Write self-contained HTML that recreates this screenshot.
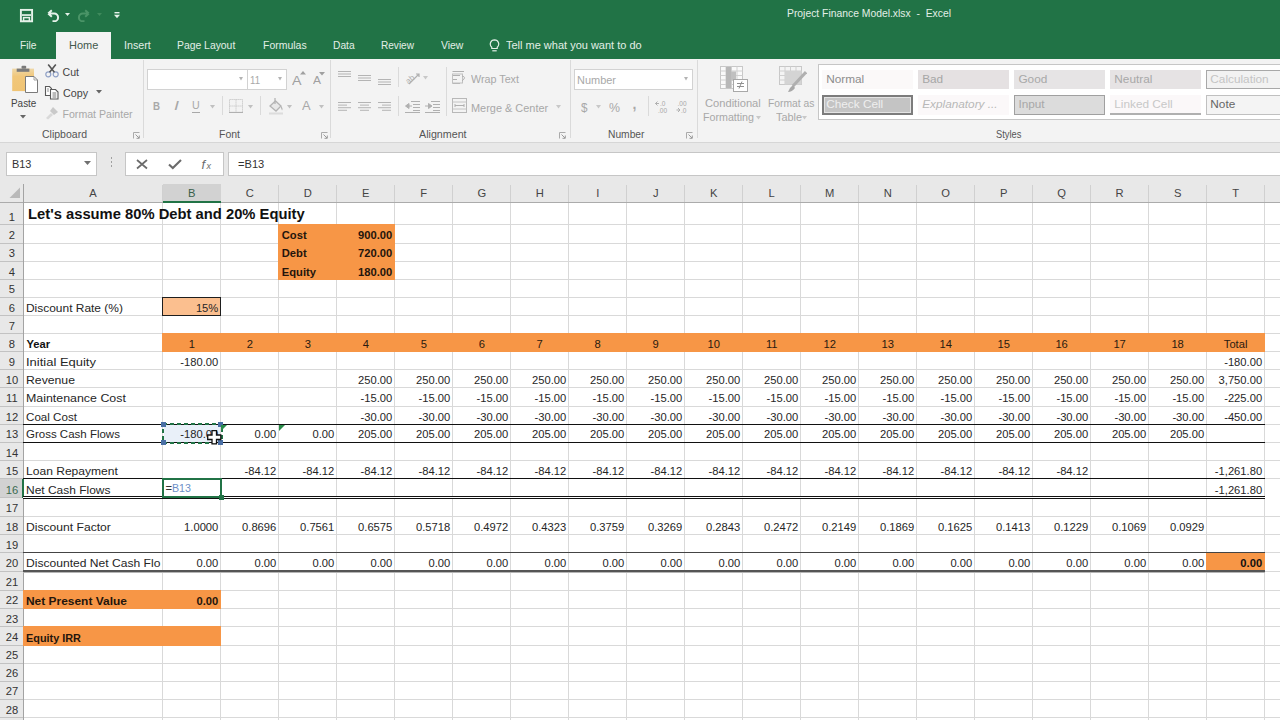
<!DOCTYPE html><html><head><meta charset="utf-8"><style>
html,body{margin:0;padding:0;width:1280px;height:720px;overflow:hidden;background:#fff;}
body{position:relative;font-family:"Liberation Sans",sans-serif;}
.a{position:absolute;}
.t{position:absolute;white-space:pre;}
</style></head><body>
<div class="a" style="left:0px;top:0px;width:1280px;height:58.5px;background:#217346;"></div>
<div class="a" style="left:56px;top:31.5px;width:55px;height:28px;background:#f3f3f3;"></div>
<div class="t" style="top:39.73px;font-size:10.6px;line-height:10.6px;color:#42584c;left:68.75px;transform-origin:0 50%;transform:scaleX(1.0362);">Home</div>
<div class="t" style="top:39.73px;font-size:10.6px;line-height:10.6px;color:#e3efe7;left:19.50px;transform-origin:0 50%;transform:scaleX(0.9660);">File</div>
<div class="t" style="top:39.73px;font-size:10.6px;line-height:10.6px;color:#e3efe7;left:124.00px;transform-origin:0 50%;transform:scaleX(1.0109);">Insert</div>
<div class="t" style="top:39.73px;font-size:10.6px;line-height:10.6px;color:#e3efe7;left:177.30px;transform-origin:0 50%;transform:scaleX(0.9794);">Page Layout</div>
<div class="t" style="top:39.73px;font-size:10.6px;line-height:10.6px;color:#e3efe7;left:262.60px;transform-origin:0 50%;transform:scaleX(0.9881);">Formulas</div>
<div class="t" style="top:39.73px;font-size:10.6px;line-height:10.6px;color:#e3efe7;left:333.00px;transform-origin:0 50%;transform:scaleX(0.9647);">Data</div>
<div class="t" style="top:39.73px;font-size:10.6px;line-height:10.6px;color:#e3efe7;left:381.00px;transform-origin:0 50%;transform:scaleX(0.9495);">Review</div>
<div class="t" style="top:39.73px;font-size:10.6px;line-height:10.6px;color:#e3efe7;left:440.60px;transform-origin:0 50%;transform:scaleX(0.9831);">View</div>
<div class="t" style="top:39.73px;font-size:10.6px;line-height:10.6px;color:#e3efe7;left:506.00px;transform-origin:0 50%;transform:scaleX(1.0374);">Tell me what you want to do</div>
<div class="t" style="top:9.28px;font-size:10.3px;line-height:10.3px;color:#e3efe7;left:787.00px;transform-origin:0 50%;transform:scaleX(1.0052);">Project Finance Model.xlsx  -  Excel</div>
<div class="a" style="left:0px;top:58.5px;width:1280px;height:84px;background:#f3f3f3;"></div>
<div class="a" style="left:0px;top:141.5px;width:1280px;height:1px;background:#d6d6d6;"></div>
<div class="a" style="left:0px;top:142.5px;width:1280px;height:41.5px;background:#e8e8e8;"></div>
<div class="a" style="left:0px;top:184px;width:1280px;height:536px;background:#ffffff;"></div>
<div class="a" style="left:0px;top:184px;width:1280px;height:18.5px;background:#e8e8e8;"></div>
<div class="a" style="left:0px;top:184px;width:23.4px;height:536px;background:#e8e8e8;"></div>
<div class="a" style="left:23.4px;top:224px;width:1256.6px;height:1px;background:#d9d9d9;"></div>
<div class="a" style="left:23.4px;top:243px;width:1256.6px;height:1px;background:#d9d9d9;"></div>
<div class="a" style="left:23.4px;top:261px;width:1256.6px;height:1px;background:#d9d9d9;"></div>
<div class="a" style="left:23.4px;top:279px;width:1256.6px;height:1px;background:#d9d9d9;"></div>
<div class="a" style="left:23.4px;top:297px;width:1256.6px;height:1px;background:#d9d9d9;"></div>
<div class="a" style="left:23.4px;top:315px;width:1256.6px;height:1px;background:#d9d9d9;"></div>
<div class="a" style="left:23.4px;top:333px;width:1256.6px;height:1px;background:#d9d9d9;"></div>
<div class="a" style="left:23.4px;top:351px;width:1256.6px;height:1px;background:#d9d9d9;"></div>
<div class="a" style="left:23.4px;top:369px;width:1256.6px;height:1px;background:#d9d9d9;"></div>
<div class="a" style="left:23.4px;top:387px;width:1256.6px;height:1px;background:#d9d9d9;"></div>
<div class="a" style="left:23.4px;top:406px;width:1256.6px;height:1px;background:#d9d9d9;"></div>
<div class="a" style="left:23.4px;top:424px;width:1256.6px;height:1px;background:#d9d9d9;"></div>
<div class="a" style="left:23.4px;top:442px;width:1256.6px;height:1px;background:#d9d9d9;"></div>
<div class="a" style="left:23.4px;top:460px;width:1256.6px;height:1px;background:#d9d9d9;"></div>
<div class="a" style="left:23.4px;top:478px;width:1256.6px;height:1px;background:#d9d9d9;"></div>
<div class="a" style="left:23.4px;top:497px;width:1256.6px;height:1px;background:#d9d9d9;"></div>
<div class="a" style="left:23.4px;top:516px;width:1256.6px;height:1px;background:#d9d9d9;"></div>
<div class="a" style="left:23.4px;top:534px;width:1256.6px;height:1px;background:#d9d9d9;"></div>
<div class="a" style="left:23.4px;top:552px;width:1256.6px;height:1px;background:#d9d9d9;"></div>
<div class="a" style="left:23.4px;top:571px;width:1256.6px;height:1px;background:#d9d9d9;"></div>
<div class="a" style="left:23.4px;top:590px;width:1256.6px;height:1px;background:#d9d9d9;"></div>
<div class="a" style="left:23.4px;top:608px;width:1256.6px;height:1px;background:#d9d9d9;"></div>
<div class="a" style="left:23.4px;top:626px;width:1256.6px;height:1px;background:#d9d9d9;"></div>
<div class="a" style="left:23.4px;top:645px;width:1256.6px;height:1px;background:#d9d9d9;"></div>
<div class="a" style="left:23.4px;top:663px;width:1256.6px;height:1px;background:#d9d9d9;"></div>
<div class="a" style="left:23.4px;top:681px;width:1256.6px;height:1px;background:#d9d9d9;"></div>
<div class="a" style="left:23.4px;top:699px;width:1256.6px;height:1px;background:#d9d9d9;"></div>
<div class="a" style="left:23.4px;top:717px;width:1256.6px;height:1px;background:#d9d9d9;"></div>
<div class="a" style="left:162px;top:202.5px;width:1px;height:517.5px;background:#d9d9d9;"></div>
<div class="a" style="left:220px;top:202.5px;width:1px;height:517.5px;background:#d9d9d9;"></div>
<div class="a" style="left:278px;top:202.5px;width:1px;height:517.5px;background:#d9d9d9;"></div>
<div class="a" style="left:336px;top:202.5px;width:1px;height:517.5px;background:#d9d9d9;"></div>
<div class="a" style="left:394px;top:202.5px;width:1px;height:517.5px;background:#d9d9d9;"></div>
<div class="a" style="left:452px;top:202.5px;width:1px;height:517.5px;background:#d9d9d9;"></div>
<div class="a" style="left:510px;top:202.5px;width:1px;height:517.5px;background:#d9d9d9;"></div>
<div class="a" style="left:568px;top:202.5px;width:1px;height:517.5px;background:#d9d9d9;"></div>
<div class="a" style="left:626px;top:202.5px;width:1px;height:517.5px;background:#d9d9d9;"></div>
<div class="a" style="left:684px;top:202.5px;width:1px;height:517.5px;background:#d9d9d9;"></div>
<div class="a" style="left:742px;top:202.5px;width:1px;height:517.5px;background:#d9d9d9;"></div>
<div class="a" style="left:800px;top:202.5px;width:1px;height:517.5px;background:#d9d9d9;"></div>
<div class="a" style="left:858px;top:202.5px;width:1px;height:517.5px;background:#d9d9d9;"></div>
<div class="a" style="left:916px;top:202.5px;width:1px;height:517.5px;background:#d9d9d9;"></div>
<div class="a" style="left:974px;top:202.5px;width:1px;height:517.5px;background:#d9d9d9;"></div>
<div class="a" style="left:1032px;top:202.5px;width:1px;height:517.5px;background:#d9d9d9;"></div>
<div class="a" style="left:1090px;top:202.5px;width:1px;height:517.5px;background:#d9d9d9;"></div>
<div class="a" style="left:1148px;top:202.5px;width:1px;height:517.5px;background:#d9d9d9;"></div>
<div class="a" style="left:1206px;top:202.5px;width:1px;height:517.5px;background:#d9d9d9;"></div>
<div class="a" style="left:1264px;top:202.5px;width:1px;height:517.5px;background:#d9d9d9;"></div>
<div class="a" style="left:162px;top:185px;width:1px;height:17.5px;background:#d0d0d0;"></div>
<div class="a" style="left:220px;top:185px;width:1px;height:17.5px;background:#d0d0d0;"></div>
<div class="a" style="left:278px;top:185px;width:1px;height:17.5px;background:#d0d0d0;"></div>
<div class="a" style="left:336px;top:185px;width:1px;height:17.5px;background:#d0d0d0;"></div>
<div class="a" style="left:394px;top:185px;width:1px;height:17.5px;background:#d0d0d0;"></div>
<div class="a" style="left:452px;top:185px;width:1px;height:17.5px;background:#d0d0d0;"></div>
<div class="a" style="left:510px;top:185px;width:1px;height:17.5px;background:#d0d0d0;"></div>
<div class="a" style="left:568px;top:185px;width:1px;height:17.5px;background:#d0d0d0;"></div>
<div class="a" style="left:626px;top:185px;width:1px;height:17.5px;background:#d0d0d0;"></div>
<div class="a" style="left:684px;top:185px;width:1px;height:17.5px;background:#d0d0d0;"></div>
<div class="a" style="left:742px;top:185px;width:1px;height:17.5px;background:#d0d0d0;"></div>
<div class="a" style="left:800px;top:185px;width:1px;height:17.5px;background:#d0d0d0;"></div>
<div class="a" style="left:858px;top:185px;width:1px;height:17.5px;background:#d0d0d0;"></div>
<div class="a" style="left:916px;top:185px;width:1px;height:17.5px;background:#d0d0d0;"></div>
<div class="a" style="left:974px;top:185px;width:1px;height:17.5px;background:#d0d0d0;"></div>
<div class="a" style="left:1032px;top:185px;width:1px;height:17.5px;background:#d0d0d0;"></div>
<div class="a" style="left:1090px;top:185px;width:1px;height:17.5px;background:#d0d0d0;"></div>
<div class="a" style="left:1148px;top:185px;width:1px;height:17.5px;background:#d0d0d0;"></div>
<div class="a" style="left:1206px;top:185px;width:1px;height:17.5px;background:#d0d0d0;"></div>
<div class="a" style="left:1264px;top:185px;width:1px;height:17.5px;background:#d0d0d0;"></div>
<div class="a" style="left:0px;top:224px;width:23.4px;height:1px;background:#c2c2c2;"></div>
<div class="a" style="left:0px;top:243px;width:23.4px;height:1px;background:#c2c2c2;"></div>
<div class="a" style="left:0px;top:261px;width:23.4px;height:1px;background:#c2c2c2;"></div>
<div class="a" style="left:0px;top:279px;width:23.4px;height:1px;background:#c2c2c2;"></div>
<div class="a" style="left:0px;top:297px;width:23.4px;height:1px;background:#c2c2c2;"></div>
<div class="a" style="left:0px;top:315px;width:23.4px;height:1px;background:#c2c2c2;"></div>
<div class="a" style="left:0px;top:333px;width:23.4px;height:1px;background:#c2c2c2;"></div>
<div class="a" style="left:0px;top:351px;width:23.4px;height:1px;background:#c2c2c2;"></div>
<div class="a" style="left:0px;top:369px;width:23.4px;height:1px;background:#c2c2c2;"></div>
<div class="a" style="left:0px;top:387px;width:23.4px;height:1px;background:#c2c2c2;"></div>
<div class="a" style="left:0px;top:406px;width:23.4px;height:1px;background:#c2c2c2;"></div>
<div class="a" style="left:0px;top:424px;width:23.4px;height:1px;background:#c2c2c2;"></div>
<div class="a" style="left:0px;top:442px;width:23.4px;height:1px;background:#c2c2c2;"></div>
<div class="a" style="left:0px;top:460px;width:23.4px;height:1px;background:#c2c2c2;"></div>
<div class="a" style="left:0px;top:478px;width:23.4px;height:1px;background:#c2c2c2;"></div>
<div class="a" style="left:0px;top:497px;width:23.4px;height:1px;background:#c2c2c2;"></div>
<div class="a" style="left:0px;top:516px;width:23.4px;height:1px;background:#c2c2c2;"></div>
<div class="a" style="left:0px;top:534px;width:23.4px;height:1px;background:#c2c2c2;"></div>
<div class="a" style="left:0px;top:552px;width:23.4px;height:1px;background:#c2c2c2;"></div>
<div class="a" style="left:0px;top:571px;width:23.4px;height:1px;background:#c2c2c2;"></div>
<div class="a" style="left:0px;top:590px;width:23.4px;height:1px;background:#c2c2c2;"></div>
<div class="a" style="left:0px;top:608px;width:23.4px;height:1px;background:#c2c2c2;"></div>
<div class="a" style="left:0px;top:626px;width:23.4px;height:1px;background:#c2c2c2;"></div>
<div class="a" style="left:0px;top:645px;width:23.4px;height:1px;background:#c2c2c2;"></div>
<div class="a" style="left:0px;top:663px;width:23.4px;height:1px;background:#c2c2c2;"></div>
<div class="a" style="left:0px;top:681px;width:23.4px;height:1px;background:#c2c2c2;"></div>
<div class="a" style="left:0px;top:699px;width:23.4px;height:1px;background:#c2c2c2;"></div>
<div class="a" style="left:0px;top:717px;width:23.4px;height:1px;background:#c2c2c2;"></div>
<div class="a" style="left:0px;top:202px;width:1280px;height:1px;background:#ababab;"></div>
<div class="a" style="left:23px;top:184px;width:1px;height:536px;background:#a3a3a3;"></div>
<div class="a" style="left:163.3px;top:184px;width:57.5px;height:18.5px;background:#d2d2d2;"></div>
<div class="a" style="left:163.3px;top:200.5px;width:57.5px;height:2px;background:#217346;"></div>
<div class="a" style="left:0px;top:479.0px;width:22.5px;height:18.0px;background:#d2d2d2;"></div>
<div class="a" style="left:22px;top:478.5px;width:2px;height:19.0px;background:#217346;"></div>
<div class="t" style="top:187.52px;font-size:11.2px;line-height:11.2px;color:#444;left:93.10px;transform:translateX(-50%) scaleX(1.0000);">A</div>
<div class="t" style="top:187.52px;font-size:11.2px;line-height:11.2px;color:#3a5f4a;left:191.80px;transform:translateX(-50%) scaleX(1.0000);">B</div>
<div class="t" style="top:187.52px;font-size:11.2px;line-height:11.2px;color:#444;left:249.79px;transform:translateX(-50%) scaleX(1.0000);">C</div>
<div class="t" style="top:187.52px;font-size:11.2px;line-height:11.2px;color:#444;left:307.77px;transform:translateX(-50%) scaleX(1.0000);">D</div>
<div class="t" style="top:187.52px;font-size:11.2px;line-height:11.2px;color:#444;left:365.76px;transform:translateX(-50%) scaleX(1.0000);">E</div>
<div class="t" style="top:187.52px;font-size:11.2px;line-height:11.2px;color:#444;left:423.75px;transform:translateX(-50%) scaleX(1.0000);">F</div>
<div class="t" style="top:187.52px;font-size:11.2px;line-height:11.2px;color:#444;left:481.75px;transform:translateX(-50%) scaleX(1.0000);">G</div>
<div class="t" style="top:187.52px;font-size:11.2px;line-height:11.2px;color:#444;left:539.74px;transform:translateX(-50%) scaleX(1.0000);">H</div>
<div class="t" style="top:187.52px;font-size:11.2px;line-height:11.2px;color:#444;left:597.73px;transform:translateX(-50%) scaleX(1.0000);">I</div>
<div class="t" style="top:187.52px;font-size:11.2px;line-height:11.2px;color:#444;left:655.72px;transform:translateX(-50%) scaleX(1.0000);">J</div>
<div class="t" style="top:187.52px;font-size:11.2px;line-height:11.2px;color:#444;left:713.71px;transform:translateX(-50%) scaleX(1.0000);">K</div>
<div class="t" style="top:187.52px;font-size:11.2px;line-height:11.2px;color:#444;left:771.70px;transform:translateX(-50%) scaleX(1.0000);">L</div>
<div class="t" style="top:187.52px;font-size:11.2px;line-height:11.2px;color:#444;left:829.69px;transform:translateX(-50%) scaleX(1.0000);">M</div>
<div class="t" style="top:187.52px;font-size:11.2px;line-height:11.2px;color:#444;left:887.68px;transform:translateX(-50%) scaleX(1.0000);">N</div>
<div class="t" style="top:187.52px;font-size:11.2px;line-height:11.2px;color:#444;left:945.67px;transform:translateX(-50%) scaleX(1.0000);">O</div>
<div class="t" style="top:187.52px;font-size:11.2px;line-height:11.2px;color:#444;left:1003.66px;transform:translateX(-50%) scaleX(1.0000);">P</div>
<div class="t" style="top:187.52px;font-size:11.2px;line-height:11.2px;color:#444;left:1061.64px;transform:translateX(-50%) scaleX(1.0000);">Q</div>
<div class="t" style="top:187.52px;font-size:11.2px;line-height:11.2px;color:#444;left:1119.64px;transform:translateX(-50%) scaleX(1.0000);">R</div>
<div class="t" style="top:187.52px;font-size:11.2px;line-height:11.2px;color:#444;left:1177.62px;transform:translateX(-50%) scaleX(1.0000);">S</div>
<div class="t" style="top:187.52px;font-size:11.2px;line-height:11.2px;color:#444;left:1235.61px;transform:translateX(-50%) scaleX(1.0000);">T</div>
<div class="t" style="top:212.12px;font-size:11.2px;line-height:11.2px;color:#333;left:11.90px;transform:translateX(-50%) scaleX(1.0000);">1</div>
<div class="t" style="top:230.22px;font-size:11.2px;line-height:11.2px;color:#333;left:11.90px;transform:translateX(-50%) scaleX(1.0000);">2</div>
<div class="t" style="top:248.37px;font-size:11.2px;line-height:11.2px;color:#333;left:11.90px;transform:translateX(-50%) scaleX(1.0000);">3</div>
<div class="t" style="top:266.52px;font-size:11.2px;line-height:11.2px;color:#333;left:11.90px;transform:translateX(-50%) scaleX(1.0000);">4</div>
<div class="t" style="top:284.37px;font-size:11.2px;line-height:11.2px;color:#333;left:11.90px;transform:translateX(-50%) scaleX(1.0000);">5</div>
<div class="t" style="top:302.52px;font-size:11.2px;line-height:11.2px;color:#333;left:11.90px;transform:translateX(-50%) scaleX(1.0000);">6</div>
<div class="t" style="top:320.62px;font-size:11.2px;line-height:11.2px;color:#333;left:11.90px;transform:translateX(-50%) scaleX(1.0000);">7</div>
<div class="t" style="top:338.62px;font-size:11.2px;line-height:11.2px;color:#333;left:11.90px;transform:translateX(-50%) scaleX(1.0000);">8</div>
<div class="t" style="top:356.72px;font-size:11.2px;line-height:11.2px;color:#333;left:11.90px;transform:translateX(-50%) scaleX(1.0000);">9</div>
<div class="t" style="top:374.87px;font-size:11.2px;line-height:11.2px;color:#333;left:11.90px;transform:translateX(-50%) scaleX(1.0000);">10</div>
<div class="t" style="top:393.12px;font-size:11.2px;line-height:11.2px;color:#333;left:11.90px;transform:translateX(-50%) scaleX(1.0000);">11</div>
<div class="t" style="top:411.52px;font-size:11.2px;line-height:11.2px;color:#333;left:11.90px;transform:translateX(-50%) scaleX(1.0000);">12</div>
<div class="t" style="top:429.37px;font-size:11.2px;line-height:11.2px;color:#333;left:11.90px;transform:translateX(-50%) scaleX(1.0000);">13</div>
<div class="t" style="top:447.52px;font-size:11.2px;line-height:11.2px;color:#333;left:11.90px;transform:translateX(-50%) scaleX(1.0000);">14</div>
<div class="t" style="top:465.62px;font-size:11.2px;line-height:11.2px;color:#333;left:11.90px;transform:translateX(-50%) scaleX(1.0000);">15</div>
<div class="t" style="top:484.62px;font-size:11.2px;line-height:11.2px;color:#3a6a50;left:11.90px;transform:translateX(-50%) scaleX(1.0000);">16</div>
<div class="t" style="top:503.12px;font-size:11.2px;line-height:11.2px;color:#333;left:11.90px;transform:translateX(-50%) scaleX(1.0000);">17</div>
<div class="t" style="top:521.52px;font-size:11.2px;line-height:11.2px;color:#333;left:11.90px;transform:translateX(-50%) scaleX(1.0000);">18</div>
<div class="t" style="top:539.87px;font-size:11.2px;line-height:11.2px;color:#333;left:11.90px;transform:translateX(-50%) scaleX(1.0000);">19</div>
<div class="t" style="top:558.32px;font-size:11.2px;line-height:11.2px;color:#333;left:11.90px;transform:translateX(-50%) scaleX(1.0000);">20</div>
<div class="t" style="top:577.12px;font-size:11.2px;line-height:11.2px;color:#333;left:11.90px;transform:translateX(-50%) scaleX(1.0000);">21</div>
<div class="t" style="top:595.42px;font-size:11.2px;line-height:11.2px;color:#333;left:11.90px;transform:translateX(-50%) scaleX(1.0000);">22</div>
<div class="t" style="top:614.12px;font-size:11.2px;line-height:11.2px;color:#333;left:11.90px;transform:translateX(-50%) scaleX(1.0000);">23</div>
<div class="t" style="top:632.42px;font-size:11.2px;line-height:11.2px;color:#333;left:11.90px;transform:translateX(-50%) scaleX(1.0000);">24</div>
<div class="t" style="top:650.42px;font-size:11.2px;line-height:11.2px;color:#333;left:11.90px;transform:translateX(-50%) scaleX(1.0000);">25</div>
<div class="t" style="top:668.42px;font-size:11.2px;line-height:11.2px;color:#333;left:11.90px;transform:translateX(-50%) scaleX(1.0000);">26</div>
<div class="t" style="top:686.42px;font-size:11.2px;line-height:11.2px;color:#333;left:11.90px;transform:translateX(-50%) scaleX(1.0000);">27</div>
<div class="t" style="top:704.62px;font-size:11.2px;line-height:11.2px;color:#333;left:11.90px;transform:translateX(-50%) scaleX(1.0000);">28</div>
<svg class="a" style="left:9px;top:187px;" width="12" height="12" viewBox="0 0 12 12"><path d="M11 0.5 L11 11 L0.5 11 Z" fill="#b9b9b9"/></svg>
<div class="a" style="left:278px;top:224px;width:117px;height:56px;background:#f79646;"></div>
<div class="a" style="left:162px;top:333px;width:1103px;height:19px;background:#f79646;"></div>
<div class="a" style="left:23px;top:590px;width:198px;height:19px;background:#f79646;"></div>
<div class="a" style="left:23px;top:626px;width:198px;height:20px;background:#f79646;"></div>
<div class="a" style="left:1206px;top:552px;width:59px;height:20px;background:#f79646;"></div>
<div class="a" style="left:162px;top:297px;width:59px;height:19px;background:#fbbf8f;"></div>
<div class="a" style="left:162px;top:297px;width:59px;height:19px;border:1px solid #1e1e1e;box-sizing:border-box;"></div>
<div class="a" style="left:23px;top:424px;width:1242px;height:1px;background:#111;"></div>
<div class="a" style="left:23px;top:442px;width:1242px;height:1px;background:#111;"></div>
<div class="a" style="left:23px;top:478px;width:1242px;height:1px;background:#111;"></div>
<div class="a" style="left:23px;top:496px;width:1242px;height:1px;background:#111;"></div>
<div class="a" style="left:23px;top:498px;width:1242px;height:1px;background:#111;"></div>
<div class="a" style="left:23.4px;top:497px;width:1256.6px;height:1px;background:#fff;"></div>
<div class="a" style="left:23px;top:552px;width:1242px;height:1px;background:#444;"></div>
<div class="a" style="left:23px;top:570px;width:1242px;height:2px;background:#555;"></div>
<div class="a" style="left:23px;top:572px;width:1242px;height:1px;background:#b5b5b5;"></div>
<div class="t" style="top:207.43px;font-size:14.5px;line-height:14.5px;color:#111;font-weight:bold;left:27.50px;transform-origin:0 50%;transform:scaleX(1.0180);">Let's assume 80% Debt and 20% Equity</div>
<div class="t" style="top:230.32px;font-size:11.2px;line-height:11.2px;color:#24150c;font-weight:bold;left:281.78px;transform-origin:0 50%;">Cost</div>
<div class="t" style="top:230.32px;font-size:11.2px;line-height:11.2px;color:#24150c;font-weight:bold;right:887.74px;transform-origin:100% 50%;">900.00</div>
<div class="t" style="top:248.47px;font-size:11.2px;line-height:11.2px;color:#24150c;font-weight:bold;left:281.78px;transform-origin:0 50%;">Debt</div>
<div class="t" style="top:248.47px;font-size:11.2px;line-height:11.2px;color:#24150c;font-weight:bold;right:887.74px;transform-origin:100% 50%;">720.00</div>
<div class="t" style="top:266.62px;font-size:11.2px;line-height:11.2px;color:#24150c;font-weight:bold;left:281.78px;transform-origin:0 50%;">Equity</div>
<div class="t" style="top:266.62px;font-size:11.2px;line-height:11.2px;color:#24150c;font-weight:bold;right:887.74px;transform-origin:100% 50%;">180.00</div>
<div class="t" style="top:302.62px;font-size:11.2px;line-height:11.2px;color:#262626;left:26.40px;transform-origin:0 50%;transform:scaleX(1.0674);">Discount Rate (%)</div>
<div class="t" style="top:302.62px;font-size:11.2px;line-height:11.2px;color:#262626;right:1061.71px;transform-origin:100% 50%;">15%</div>
<div class="t" style="top:338.72px;font-size:11.2px;line-height:11.2px;color:#111;font-weight:bold;left:26.40px;transform-origin:0 50%;">Year</div>
<div class="t" style="top:338.72px;font-size:11.2px;line-height:11.2px;color:#2a1a10;left:191.80px;transform:translateX(-50%) scaleX(1.0000);">1</div>
<div class="t" style="top:338.72px;font-size:11.2px;line-height:11.2px;color:#2a1a10;left:249.79px;transform:translateX(-50%) scaleX(1.0000);">2</div>
<div class="t" style="top:338.72px;font-size:11.2px;line-height:11.2px;color:#2a1a10;left:307.77px;transform:translateX(-50%) scaleX(1.0000);">3</div>
<div class="t" style="top:338.72px;font-size:11.2px;line-height:11.2px;color:#2a1a10;left:365.76px;transform:translateX(-50%) scaleX(1.0000);">4</div>
<div class="t" style="top:338.72px;font-size:11.2px;line-height:11.2px;color:#2a1a10;left:423.75px;transform:translateX(-50%) scaleX(1.0000);">5</div>
<div class="t" style="top:338.72px;font-size:11.2px;line-height:11.2px;color:#2a1a10;left:481.75px;transform:translateX(-50%) scaleX(1.0000);">6</div>
<div class="t" style="top:338.72px;font-size:11.2px;line-height:11.2px;color:#2a1a10;left:539.74px;transform:translateX(-50%) scaleX(1.0000);">7</div>
<div class="t" style="top:338.72px;font-size:11.2px;line-height:11.2px;color:#2a1a10;left:597.73px;transform:translateX(-50%) scaleX(1.0000);">8</div>
<div class="t" style="top:338.72px;font-size:11.2px;line-height:11.2px;color:#2a1a10;left:655.72px;transform:translateX(-50%) scaleX(1.0000);">9</div>
<div class="t" style="top:338.72px;font-size:11.2px;line-height:11.2px;color:#2a1a10;left:713.71px;transform:translateX(-50%) scaleX(1.0000);">10</div>
<div class="t" style="top:338.72px;font-size:11.2px;line-height:11.2px;color:#2a1a10;left:771.70px;transform:translateX(-50%) scaleX(1.0000);">11</div>
<div class="t" style="top:338.72px;font-size:11.2px;line-height:11.2px;color:#2a1a10;left:829.69px;transform:translateX(-50%) scaleX(1.0000);">12</div>
<div class="t" style="top:338.72px;font-size:11.2px;line-height:11.2px;color:#2a1a10;left:887.68px;transform:translateX(-50%) scaleX(1.0000);">13</div>
<div class="t" style="top:338.72px;font-size:11.2px;line-height:11.2px;color:#2a1a10;left:945.67px;transform:translateX(-50%) scaleX(1.0000);">14</div>
<div class="t" style="top:338.72px;font-size:11.2px;line-height:11.2px;color:#2a1a10;left:1003.66px;transform:translateX(-50%) scaleX(1.0000);">15</div>
<div class="t" style="top:338.72px;font-size:11.2px;line-height:11.2px;color:#2a1a10;left:1061.64px;transform:translateX(-50%) scaleX(1.0000);">16</div>
<div class="t" style="top:338.72px;font-size:11.2px;line-height:11.2px;color:#2a1a10;left:1119.64px;transform:translateX(-50%) scaleX(1.0000);">17</div>
<div class="t" style="top:338.72px;font-size:11.2px;line-height:11.2px;color:#2a1a10;left:1177.62px;transform:translateX(-50%) scaleX(1.0000);">18</div>
<div class="t" style="top:338.72px;font-size:11.2px;line-height:11.2px;color:#2a1a10;left:1235.61px;transform:translateX(-50%) scaleX(1.0000);">Total</div>
<div class="t" style="top:356.82px;font-size:11.2px;line-height:11.2px;color:#262626;left:26.40px;transform-origin:0 50%;transform:scaleX(1.1592);">Initial Equity</div>
<div class="t" style="top:356.82px;font-size:11.2px;line-height:11.2px;color:#262626;right:1061.71px;transform-origin:100% 50%;">-180.00</div>
<div class="t" style="top:356.82px;font-size:11.2px;line-height:11.2px;color:#262626;right:17.89px;transform-origin:100% 50%;">-180.00</div>
<div class="t" style="top:374.97px;font-size:11.2px;line-height:11.2px;color:#262626;left:26.40px;transform-origin:0 50%;transform:scaleX(1.0929);">Revenue</div>
<div class="t" style="top:393.22px;font-size:11.2px;line-height:11.2px;color:#262626;left:26.40px;transform-origin:0 50%;transform:scaleX(1.1077);">Maintenance Cost</div>
<div class="t" style="top:411.62px;font-size:11.2px;line-height:11.2px;color:#262626;left:26.40px;transform-origin:0 50%;transform:scaleX(1.0371);">Coal Cost</div>
<div class="t" style="top:374.97px;font-size:11.2px;line-height:11.2px;color:#262626;right:887.74px;transform-origin:100% 50%;">250.00</div>
<div class="t" style="top:393.22px;font-size:11.2px;line-height:11.2px;color:#262626;right:887.74px;transform-origin:100% 50%;">-15.00</div>
<div class="t" style="top:411.62px;font-size:11.2px;line-height:11.2px;color:#262626;right:887.74px;transform-origin:100% 50%;">-30.00</div>
<div class="t" style="top:429.47px;font-size:11.2px;line-height:11.2px;color:#262626;right:887.74px;transform-origin:100% 50%;">205.00</div>
<div class="t" style="top:374.97px;font-size:11.2px;line-height:11.2px;color:#262626;right:829.75px;transform-origin:100% 50%;">250.00</div>
<div class="t" style="top:393.22px;font-size:11.2px;line-height:11.2px;color:#262626;right:829.75px;transform-origin:100% 50%;">-15.00</div>
<div class="t" style="top:411.62px;font-size:11.2px;line-height:11.2px;color:#262626;right:829.75px;transform-origin:100% 50%;">-30.00</div>
<div class="t" style="top:429.47px;font-size:11.2px;line-height:11.2px;color:#262626;right:829.75px;transform-origin:100% 50%;">205.00</div>
<div class="t" style="top:374.97px;font-size:11.2px;line-height:11.2px;color:#262626;right:771.76px;transform-origin:100% 50%;">250.00</div>
<div class="t" style="top:393.22px;font-size:11.2px;line-height:11.2px;color:#262626;right:771.76px;transform-origin:100% 50%;">-15.00</div>
<div class="t" style="top:411.62px;font-size:11.2px;line-height:11.2px;color:#262626;right:771.76px;transform-origin:100% 50%;">-30.00</div>
<div class="t" style="top:429.47px;font-size:11.2px;line-height:11.2px;color:#262626;right:771.76px;transform-origin:100% 50%;">205.00</div>
<div class="t" style="top:374.97px;font-size:11.2px;line-height:11.2px;color:#262626;right:713.77px;transform-origin:100% 50%;">250.00</div>
<div class="t" style="top:393.22px;font-size:11.2px;line-height:11.2px;color:#262626;right:713.77px;transform-origin:100% 50%;">-15.00</div>
<div class="t" style="top:411.62px;font-size:11.2px;line-height:11.2px;color:#262626;right:713.77px;transform-origin:100% 50%;">-30.00</div>
<div class="t" style="top:429.47px;font-size:11.2px;line-height:11.2px;color:#262626;right:713.77px;transform-origin:100% 50%;">205.00</div>
<div class="t" style="top:374.97px;font-size:11.2px;line-height:11.2px;color:#262626;right:655.78px;transform-origin:100% 50%;">250.00</div>
<div class="t" style="top:393.22px;font-size:11.2px;line-height:11.2px;color:#262626;right:655.78px;transform-origin:100% 50%;">-15.00</div>
<div class="t" style="top:411.62px;font-size:11.2px;line-height:11.2px;color:#262626;right:655.78px;transform-origin:100% 50%;">-30.00</div>
<div class="t" style="top:429.47px;font-size:11.2px;line-height:11.2px;color:#262626;right:655.78px;transform-origin:100% 50%;">205.00</div>
<div class="t" style="top:374.97px;font-size:11.2px;line-height:11.2px;color:#262626;right:597.79px;transform-origin:100% 50%;">250.00</div>
<div class="t" style="top:393.22px;font-size:11.2px;line-height:11.2px;color:#262626;right:597.79px;transform-origin:100% 50%;">-15.00</div>
<div class="t" style="top:411.62px;font-size:11.2px;line-height:11.2px;color:#262626;right:597.79px;transform-origin:100% 50%;">-30.00</div>
<div class="t" style="top:429.47px;font-size:11.2px;line-height:11.2px;color:#262626;right:597.79px;transform-origin:100% 50%;">205.00</div>
<div class="t" style="top:374.97px;font-size:11.2px;line-height:11.2px;color:#262626;right:539.80px;transform-origin:100% 50%;">250.00</div>
<div class="t" style="top:393.22px;font-size:11.2px;line-height:11.2px;color:#262626;right:539.80px;transform-origin:100% 50%;">-15.00</div>
<div class="t" style="top:411.62px;font-size:11.2px;line-height:11.2px;color:#262626;right:539.80px;transform-origin:100% 50%;">-30.00</div>
<div class="t" style="top:429.47px;font-size:11.2px;line-height:11.2px;color:#262626;right:539.80px;transform-origin:100% 50%;">205.00</div>
<div class="t" style="top:374.97px;font-size:11.2px;line-height:11.2px;color:#262626;right:481.81px;transform-origin:100% 50%;">250.00</div>
<div class="t" style="top:393.22px;font-size:11.2px;line-height:11.2px;color:#262626;right:481.81px;transform-origin:100% 50%;">-15.00</div>
<div class="t" style="top:411.62px;font-size:11.2px;line-height:11.2px;color:#262626;right:481.81px;transform-origin:100% 50%;">-30.00</div>
<div class="t" style="top:429.47px;font-size:11.2px;line-height:11.2px;color:#262626;right:481.81px;transform-origin:100% 50%;">205.00</div>
<div class="t" style="top:374.97px;font-size:11.2px;line-height:11.2px;color:#262626;right:423.82px;transform-origin:100% 50%;">250.00</div>
<div class="t" style="top:393.22px;font-size:11.2px;line-height:11.2px;color:#262626;right:423.82px;transform-origin:100% 50%;">-15.00</div>
<div class="t" style="top:411.62px;font-size:11.2px;line-height:11.2px;color:#262626;right:423.82px;transform-origin:100% 50%;">-30.00</div>
<div class="t" style="top:429.47px;font-size:11.2px;line-height:11.2px;color:#262626;right:423.82px;transform-origin:100% 50%;">205.00</div>
<div class="t" style="top:374.97px;font-size:11.2px;line-height:11.2px;color:#262626;right:365.83px;transform-origin:100% 50%;">250.00</div>
<div class="t" style="top:393.22px;font-size:11.2px;line-height:11.2px;color:#262626;right:365.83px;transform-origin:100% 50%;">-15.00</div>
<div class="t" style="top:411.62px;font-size:11.2px;line-height:11.2px;color:#262626;right:365.83px;transform-origin:100% 50%;">-30.00</div>
<div class="t" style="top:429.47px;font-size:11.2px;line-height:11.2px;color:#262626;right:365.83px;transform-origin:100% 50%;">205.00</div>
<div class="t" style="top:374.97px;font-size:11.2px;line-height:11.2px;color:#262626;right:307.84px;transform-origin:100% 50%;">250.00</div>
<div class="t" style="top:393.22px;font-size:11.2px;line-height:11.2px;color:#262626;right:307.84px;transform-origin:100% 50%;">-15.00</div>
<div class="t" style="top:411.62px;font-size:11.2px;line-height:11.2px;color:#262626;right:307.84px;transform-origin:100% 50%;">-30.00</div>
<div class="t" style="top:429.47px;font-size:11.2px;line-height:11.2px;color:#262626;right:307.84px;transform-origin:100% 50%;">205.00</div>
<div class="t" style="top:374.97px;font-size:11.2px;line-height:11.2px;color:#262626;right:249.85px;transform-origin:100% 50%;">250.00</div>
<div class="t" style="top:393.22px;font-size:11.2px;line-height:11.2px;color:#262626;right:249.85px;transform-origin:100% 50%;">-15.00</div>
<div class="t" style="top:411.62px;font-size:11.2px;line-height:11.2px;color:#262626;right:249.85px;transform-origin:100% 50%;">-30.00</div>
<div class="t" style="top:429.47px;font-size:11.2px;line-height:11.2px;color:#262626;right:249.85px;transform-origin:100% 50%;">205.00</div>
<div class="t" style="top:374.97px;font-size:11.2px;line-height:11.2px;color:#262626;right:191.86px;transform-origin:100% 50%;">250.00</div>
<div class="t" style="top:393.22px;font-size:11.2px;line-height:11.2px;color:#262626;right:191.86px;transform-origin:100% 50%;">-15.00</div>
<div class="t" style="top:411.62px;font-size:11.2px;line-height:11.2px;color:#262626;right:191.86px;transform-origin:100% 50%;">-30.00</div>
<div class="t" style="top:429.47px;font-size:11.2px;line-height:11.2px;color:#262626;right:191.86px;transform-origin:100% 50%;">205.00</div>
<div class="t" style="top:374.97px;font-size:11.2px;line-height:11.2px;color:#262626;right:133.87px;transform-origin:100% 50%;">250.00</div>
<div class="t" style="top:393.22px;font-size:11.2px;line-height:11.2px;color:#262626;right:133.87px;transform-origin:100% 50%;">-15.00</div>
<div class="t" style="top:411.62px;font-size:11.2px;line-height:11.2px;color:#262626;right:133.87px;transform-origin:100% 50%;">-30.00</div>
<div class="t" style="top:429.47px;font-size:11.2px;line-height:11.2px;color:#262626;right:133.87px;transform-origin:100% 50%;">205.00</div>
<div class="t" style="top:374.97px;font-size:11.2px;line-height:11.2px;color:#262626;right:75.88px;transform-origin:100% 50%;">250.00</div>
<div class="t" style="top:393.22px;font-size:11.2px;line-height:11.2px;color:#262626;right:75.88px;transform-origin:100% 50%;">-15.00</div>
<div class="t" style="top:411.62px;font-size:11.2px;line-height:11.2px;color:#262626;right:75.88px;transform-origin:100% 50%;">-30.00</div>
<div class="t" style="top:429.47px;font-size:11.2px;line-height:11.2px;color:#262626;right:75.88px;transform-origin:100% 50%;">205.00</div>
<div class="t" style="top:374.97px;font-size:11.2px;line-height:11.2px;color:#262626;right:17.89px;transform-origin:100% 50%;">3,750.00</div>
<div class="t" style="top:393.22px;font-size:11.2px;line-height:11.2px;color:#262626;right:17.89px;transform-origin:100% 50%;">-225.00</div>
<div class="t" style="top:411.62px;font-size:11.2px;line-height:11.2px;color:#262626;right:17.89px;transform-origin:100% 50%;">-450.00</div>
<div class="t" style="top:429.47px;font-size:11.2px;line-height:11.2px;color:#262626;left:26.40px;transform-origin:0 50%;transform:scaleX(1.0275);">Gross Cash Flows</div>
<div class="t" style="top:429.47px;font-size:11.2px;line-height:11.2px;color:#262626;right:1003.72px;transform-origin:100% 50%;">0.00</div>
<div class="t" style="top:429.47px;font-size:11.2px;line-height:11.2px;color:#262626;right:945.73px;transform-origin:100% 50%;">0.00</div>
<div class="t" style="top:465.72px;font-size:11.2px;line-height:11.2px;color:#262626;left:26.40px;transform-origin:0 50%;transform:scaleX(1.0785);">Loan Repayment</div>
<div class="t" style="top:465.72px;font-size:11.2px;line-height:11.2px;color:#262626;right:1003.72px;transform-origin:100% 50%;">-84.12</div>
<div class="t" style="top:465.72px;font-size:11.2px;line-height:11.2px;color:#262626;right:945.73px;transform-origin:100% 50%;">-84.12</div>
<div class="t" style="top:465.72px;font-size:11.2px;line-height:11.2px;color:#262626;right:887.74px;transform-origin:100% 50%;">-84.12</div>
<div class="t" style="top:465.72px;font-size:11.2px;line-height:11.2px;color:#262626;right:829.75px;transform-origin:100% 50%;">-84.12</div>
<div class="t" style="top:465.72px;font-size:11.2px;line-height:11.2px;color:#262626;right:771.76px;transform-origin:100% 50%;">-84.12</div>
<div class="t" style="top:465.72px;font-size:11.2px;line-height:11.2px;color:#262626;right:713.77px;transform-origin:100% 50%;">-84.12</div>
<div class="t" style="top:465.72px;font-size:11.2px;line-height:11.2px;color:#262626;right:655.78px;transform-origin:100% 50%;">-84.12</div>
<div class="t" style="top:465.72px;font-size:11.2px;line-height:11.2px;color:#262626;right:597.79px;transform-origin:100% 50%;">-84.12</div>
<div class="t" style="top:465.72px;font-size:11.2px;line-height:11.2px;color:#262626;right:539.80px;transform-origin:100% 50%;">-84.12</div>
<div class="t" style="top:465.72px;font-size:11.2px;line-height:11.2px;color:#262626;right:481.81px;transform-origin:100% 50%;">-84.12</div>
<div class="t" style="top:465.72px;font-size:11.2px;line-height:11.2px;color:#262626;right:423.82px;transform-origin:100% 50%;">-84.12</div>
<div class="t" style="top:465.72px;font-size:11.2px;line-height:11.2px;color:#262626;right:365.83px;transform-origin:100% 50%;">-84.12</div>
<div class="t" style="top:465.72px;font-size:11.2px;line-height:11.2px;color:#262626;right:307.84px;transform-origin:100% 50%;">-84.12</div>
<div class="t" style="top:465.72px;font-size:11.2px;line-height:11.2px;color:#262626;right:249.85px;transform-origin:100% 50%;">-84.12</div>
<div class="t" style="top:465.72px;font-size:11.2px;line-height:11.2px;color:#262626;right:191.86px;transform-origin:100% 50%;">-84.12</div>
<div class="t" style="top:465.72px;font-size:11.2px;line-height:11.2px;color:#262626;right:17.89px;transform-origin:100% 50%;">-1,261.80</div>
<div class="t" style="top:484.72px;font-size:11.2px;line-height:11.2px;color:#262626;right:17.89px;transform-origin:100% 50%;">-1,261.80</div>
<div class="t" style="top:484.72px;font-size:11.2px;line-height:11.2px;color:#262626;left:26.40px;transform-origin:0 50%;transform:scaleX(1.0690);">Net Cash Flows</div>
<div class="t" style="top:521.62px;font-size:11.2px;line-height:11.2px;color:#262626;left:26.40px;transform-origin:0 50%;transform:scaleX(1.0838);">Discount Factor</div>
<div class="t" style="top:521.62px;font-size:11.2px;line-height:11.2px;color:#262626;right:1061.71px;transform-origin:100% 50%;">1.0000</div>
<div class="t" style="top:521.62px;font-size:11.2px;line-height:11.2px;color:#262626;right:1003.72px;transform-origin:100% 50%;">0.8696</div>
<div class="t" style="top:521.62px;font-size:11.2px;line-height:11.2px;color:#262626;right:945.73px;transform-origin:100% 50%;">0.7561</div>
<div class="t" style="top:521.62px;font-size:11.2px;line-height:11.2px;color:#262626;right:887.74px;transform-origin:100% 50%;">0.6575</div>
<div class="t" style="top:521.62px;font-size:11.2px;line-height:11.2px;color:#262626;right:829.75px;transform-origin:100% 50%;">0.5718</div>
<div class="t" style="top:521.62px;font-size:11.2px;line-height:11.2px;color:#262626;right:771.76px;transform-origin:100% 50%;">0.4972</div>
<div class="t" style="top:521.62px;font-size:11.2px;line-height:11.2px;color:#262626;right:713.77px;transform-origin:100% 50%;">0.4323</div>
<div class="t" style="top:521.62px;font-size:11.2px;line-height:11.2px;color:#262626;right:655.78px;transform-origin:100% 50%;">0.3759</div>
<div class="t" style="top:521.62px;font-size:11.2px;line-height:11.2px;color:#262626;right:597.79px;transform-origin:100% 50%;">0.3269</div>
<div class="t" style="top:521.62px;font-size:11.2px;line-height:11.2px;color:#262626;right:539.80px;transform-origin:100% 50%;">0.2843</div>
<div class="t" style="top:521.62px;font-size:11.2px;line-height:11.2px;color:#262626;right:481.81px;transform-origin:100% 50%;">0.2472</div>
<div class="t" style="top:521.62px;font-size:11.2px;line-height:11.2px;color:#262626;right:423.82px;transform-origin:100% 50%;">0.2149</div>
<div class="t" style="top:521.62px;font-size:11.2px;line-height:11.2px;color:#262626;right:365.83px;transform-origin:100% 50%;">0.1869</div>
<div class="t" style="top:521.62px;font-size:11.2px;line-height:11.2px;color:#262626;right:307.84px;transform-origin:100% 50%;">0.1625</div>
<div class="t" style="top:521.62px;font-size:11.2px;line-height:11.2px;color:#262626;right:249.85px;transform-origin:100% 50%;">0.1413</div>
<div class="t" style="top:521.62px;font-size:11.2px;line-height:11.2px;color:#262626;right:191.86px;transform-origin:100% 50%;">0.1229</div>
<div class="t" style="top:521.62px;font-size:11.2px;line-height:11.2px;color:#262626;right:133.87px;transform-origin:100% 50%;">0.1069</div>
<div class="t" style="top:521.62px;font-size:11.2px;line-height:11.2px;color:#262626;right:75.88px;transform-origin:100% 50%;">0.0929</div>
<div class="a" style="left:23.5px;top:552px;width:139px;height:20px;overflow:hidden">
<div class="t" style="top:5.52px;font-size:11.2px;line-height:11.2px;color:#262626;left:2.90px;transform-origin:0 50%;transform:scaleX(1.0803);">Discounted Net Cash Flo</div>
</div>
<div class="t" style="top:558.42px;font-size:11.2px;line-height:11.2px;color:#262626;right:1061.71px;transform-origin:100% 50%;">0.00</div>
<div class="t" style="top:558.42px;font-size:11.2px;line-height:11.2px;color:#262626;right:1003.72px;transform-origin:100% 50%;">0.00</div>
<div class="t" style="top:558.42px;font-size:11.2px;line-height:11.2px;color:#262626;right:945.73px;transform-origin:100% 50%;">0.00</div>
<div class="t" style="top:558.42px;font-size:11.2px;line-height:11.2px;color:#262626;right:887.74px;transform-origin:100% 50%;">0.00</div>
<div class="t" style="top:558.42px;font-size:11.2px;line-height:11.2px;color:#262626;right:829.75px;transform-origin:100% 50%;">0.00</div>
<div class="t" style="top:558.42px;font-size:11.2px;line-height:11.2px;color:#262626;right:771.76px;transform-origin:100% 50%;">0.00</div>
<div class="t" style="top:558.42px;font-size:11.2px;line-height:11.2px;color:#262626;right:713.77px;transform-origin:100% 50%;">0.00</div>
<div class="t" style="top:558.42px;font-size:11.2px;line-height:11.2px;color:#262626;right:655.78px;transform-origin:100% 50%;">0.00</div>
<div class="t" style="top:558.42px;font-size:11.2px;line-height:11.2px;color:#262626;right:597.79px;transform-origin:100% 50%;">0.00</div>
<div class="t" style="top:558.42px;font-size:11.2px;line-height:11.2px;color:#262626;right:539.80px;transform-origin:100% 50%;">0.00</div>
<div class="t" style="top:558.42px;font-size:11.2px;line-height:11.2px;color:#262626;right:481.81px;transform-origin:100% 50%;">0.00</div>
<div class="t" style="top:558.42px;font-size:11.2px;line-height:11.2px;color:#262626;right:423.82px;transform-origin:100% 50%;">0.00</div>
<div class="t" style="top:558.42px;font-size:11.2px;line-height:11.2px;color:#262626;right:365.83px;transform-origin:100% 50%;">0.00</div>
<div class="t" style="top:558.42px;font-size:11.2px;line-height:11.2px;color:#262626;right:307.84px;transform-origin:100% 50%;">0.00</div>
<div class="t" style="top:558.42px;font-size:11.2px;line-height:11.2px;color:#262626;right:249.85px;transform-origin:100% 50%;">0.00</div>
<div class="t" style="top:558.42px;font-size:11.2px;line-height:11.2px;color:#262626;right:191.86px;transform-origin:100% 50%;">0.00</div>
<div class="t" style="top:558.42px;font-size:11.2px;line-height:11.2px;color:#262626;right:133.87px;transform-origin:100% 50%;">0.00</div>
<div class="t" style="top:558.42px;font-size:11.2px;line-height:11.2px;color:#262626;right:75.88px;transform-origin:100% 50%;">0.00</div>
<div class="t" style="top:558.42px;font-size:11.2px;line-height:11.2px;color:#111;font-weight:bold;right:17.89px;transform-origin:100% 50%;">0.00</div>
<div class="t" style="top:595.52px;font-size:11.2px;line-height:11.2px;color:#24150c;font-weight:bold;left:26.40px;transform-origin:0 50%;transform:scaleX(1.0674);">Net Present Value</div>
<div class="t" style="top:595.52px;font-size:11.2px;line-height:11.2px;color:#24150c;font-weight:bold;right:1061.71px;transform-origin:100% 50%;">0.00</div>
<div class="t" style="top:632.52px;font-size:11.2px;line-height:11.2px;color:#24150c;font-weight:bold;left:26.40px;transform-origin:0 50%;transform:scaleX(0.9713);">Equity IRR</div>
<div class="a" style="left:6px;top:152px;width:91px;height:23.5px;background:#fff;border:1px solid #c6c6c6;box-sizing:border-box;"></div>
<div class="t" style="top:158.62px;font-size:11.2px;line-height:11.2px;color:#333;left:11.60px;transform-origin:0 50%;transform:scaleX(0.9735);">B13</div>
<svg class="a" style="left:84px;top:160.5px;" width="7" height="4" viewBox="0 0 7 4"><path d="M0 0 L7 0 L3.5 4 Z" fill="#707070"/></svg>
<div class="a" style="left:110.5px;top:157px;width:1.5px;height:1.5px;background:#a0a0a0;"></div>
<div class="a" style="left:110.5px;top:161px;width:1.5px;height:1.5px;background:#a0a0a0;"></div>
<div class="a" style="left:110.5px;top:165px;width:1.5px;height:1.5px;background:#a0a0a0;"></div>
<div class="a" style="left:124.8px;top:152px;width:99px;height:23.5px;background:#fff;border:1px solid #c6c6c6;box-sizing:border-box;"></div>
<svg class="a" style="left:136px;top:159px;" width="12" height="11" viewBox="0 0 12 11"><path d="M1 1 L11 9.5 M11 1 L1 9.5" stroke="#6b6b6b" stroke-width="1.7" fill="none"/></svg>
<svg class="a" style="left:168px;top:158.5px;" width="14" height="11" viewBox="0 0 14 11"><path d="M1 5.5 L4.8 9 L13 1" stroke="#6b6b6b" stroke-width="2.1" fill="none"/></svg>
<div class="t" style="top:158.00px;font-size:13px;line-height:13px;color:#6b6b6b;font-style:italic;left:201.50px;transform-origin:0 50%;font-family:"Liberation Serif",serif;">f</div>
<div class="t" style="top:162.38px;font-size:9px;line-height:9px;color:#6b6b6b;font-style:italic;left:206.50px;transform-origin:0 50%;font-family:"Liberation Serif",serif;">x</div>
<div class="a" style="left:227.5px;top:152px;width:1054.5px;height:23.5px;background:#fff;border:1px solid #c6c6c6;box-sizing:border-box;"></div>
<div class="t" style="top:158.62px;font-size:11.2px;line-height:11.2px;color:#333;left:237.50px;transform-origin:0 50%;transform:scaleX(0.9917);">=B13</div>
<div class="a" style="left:164px;top:425px;width:56px;height:17px;background:#e9f0f9;"></div>
<div class="t" style="top:429.47px;font-size:11.2px;line-height:11.2px;color:#262626;right:1061.71px;transform-origin:100% 50%;">-180.00</div>
<svg class="a" style="left:162px;top:422.5px;" width="61" height="21" viewBox="0 0 61 21"><rect x="1" y="1" width="59" height="19" fill="none" stroke="#217346" stroke-width="2" stroke-dasharray="4 3"/></svg>
<div class="a" style="left:161px;top:421.5px;width:5px;height:5px;background:#4a6fa5;"></div>
<div class="a" style="left:218px;top:421.5px;width:5px;height:5px;background:#4a6fa5;"></div>
<div class="a" style="left:161px;top:439.5px;width:5px;height:5px;background:#4a6fa5;"></div>
<div class="a" style="left:218px;top:439.5px;width:5px;height:5px;background:#4a6fa5;"></div>
<svg class="a" style="left:221.29000000000002px;top:424.5px;" width="6" height="6" viewBox="0 0 6 6"><path d="M0 0 L6 0 L0 6 Z" fill="#2a8c4a"/></svg>
<svg class="a" style="left:279.28000000000003px;top:424.5px;" width="6" height="6" viewBox="0 0 6 6"><path d="M0 0 L6 0 L0 6 Z" fill="#2a8c4a"/></svg>
<div class="a" style="left:162px;top:477.5px;width:60px;height:20.5px;border:2px solid #217346;box-sizing:border-box;"></div>
<div class="a" style="left:219px;top:495px;width:5px;height:5px;background:#217346;"></div>
<div class="t" style="top:483.02px;font-size:11.2px;line-height:11.2px;color:#333;left:165.60px;transform-origin:0 50%;">=</div>
<div class="t" style="top:483.02px;font-size:11.2px;line-height:11.2px;color:#6d8fc7;left:172.30px;transform-origin:0 50%;transform:scaleX(0.9534);">B13</div>
<svg class="a" style="left:207px;top:430px;" width="15" height="15" viewBox="0 0 15 15"><path d="M5 0.7 H9.5 V5 H13.8 V9.5 H9.5 V13.8 H5 V9.5 H0.7 V5 H5 Z" fill="#fff" stroke="#111" stroke-width="1.3"/></svg>
<svg class="a" style="left:19px;top:8px;" width="15" height="15" viewBox="0 0 15 15"><rect x="1.9" y="1.9" width="11.2" height="11.4" fill="none" stroke="#e6f2ea" stroke-width="1.9"/><rect x="3" y="6.2" width="9" height="1.7" fill="#e6f2ea"/><rect x="4.6" y="9.6" width="5.8" height="3.6" fill="none" stroke="#e6f2ea" stroke-width="1.5"/></svg>
<svg class="a" style="left:46px;top:9px;" width="14" height="13" viewBox="0 0 14 13"><path d="M2.2 4.5 L5.8 1.2 M2.2 4.5 L5.8 7.8 M2.2 4.5 H8.2 A3.9 3.9 0 0 1 8.2 12.3 H6.5" fill="none" stroke="#e6f2ea" stroke-width="2"/></svg>
<svg class="a" style="left:64.5px;top:13px;" width="5" height="3" viewBox="0 0 5 3"><path d="M0 0 H5 L2.5 3 Z" fill="#e6f2ea"/></svg>
<svg class="a" style="left:77px;top:9px;" width="14" height="13" viewBox="0 0 14 13"><path d="M11.8 4.5 L8.2 1.2 M11.8 4.5 L8.2 7.8 M11.8 4.5 H5.8 A3.9 3.9 0 0 0 5.8 12.3 H7.5" fill="none" stroke="#4a9467" stroke-width="2"/></svg>
<svg class="a" style="left:96.5px;top:13px;" width="5" height="3" viewBox="0 0 5 3"><path d="M0 0 H5 L2.5 3 Z" fill="#3f8a5c"/></svg>
<svg class="a" style="left:113.5px;top:11.5px;" width="6" height="7" viewBox="0 0 6 7"><rect x="0.5" y="0" width="5" height="1.4" fill="#e6f2ea"/><path d="M0 2.8 H6 L3 6.3 Z" fill="#e6f2ea"/></svg>
<svg class="a" style="left:489px;top:39px;" width="11" height="13" viewBox="0 0 11 13"><path d="M5.5 0.8 A4.2 4.2 0 0 1 8.2 8.2 V9.5 H2.8 V8.2 A4.2 4.2 0 0 1 5.5 0.8 Z" fill="none" stroke="#e3efe7" stroke-width="1.2"/><path d="M3.3 11.8 H7.7" stroke="#e3efe7" stroke-width="1.2"/></svg>
<svg class="a" style="left:11px;top:64px;" width="28" height="30" viewBox="0 0 28 30"><defs><linearGradient id="pg" x1="0" y1="0" x2="0" y2="1"><stop offset="0" stop-color="#efd8a8"/><stop offset="0.35" stop-color="#f1c77a"/><stop offset="1" stop-color="#f0c474"/></linearGradient></defs><rect x="1.2" y="4.6" width="21.8" height="22.5" fill="url(#pg)"/><rect x="5.7" y="4.6" width="12.7" height="3.2" fill="#7b7b7b"/><rect x="10.5" y="1.8" width="4.7" height="3" rx="1" fill="#7b7b7b"/><path d="M14.5 12.5 H23 L26.5 16 V28.5 H14.5 Z" fill="#fff" stroke="#7a7a7a" stroke-width="1"/><path d="M23 12.5 V16 H26.5" fill="none" stroke="#9a9a9a" stroke-width="0.9"/></svg>
<div class="t" style="top:97.53px;font-size:10.6px;line-height:10.6px;color:#444;left:10.60px;transform-origin:0 50%;transform:scaleX(0.9371);">Paste</div>
<svg class="a" style="left:20px;top:115px;" width="6" height="4" viewBox="0 0 6 4"><path d="M0 0 H6 L3 3.5 Z" fill="#666"/></svg>
<svg class="a" style="left:45px;top:64px;" width="14" height="14" viewBox="0 0 14 14"><circle cx="3.3" cy="10.3" r="2.5" fill="none" stroke="#8fa0c6" stroke-width="1.2"/><circle cx="10.7" cy="10.3" r="2.5" fill="none" stroke="#8fa0c6" stroke-width="1.2"/><path d="M4.6 8.2 L10.8 0.5 M9.4 8.2 L3.2 0.5" stroke="#555" stroke-width="1.6"/></svg>
<div class="t" style="top:66.63px;font-size:10.6px;line-height:10.6px;color:#444;left:62.50px;transform-origin:0 50%;">Cut</div>
<svg class="a" style="left:44px;top:85px;" width="16" height="15" viewBox="0 0 16 15"><path d="M1.5 1.5 H5.5 L7.5 3.5 V10.5 H1.5 Z" fill="#fff" stroke="#5a5a5a" stroke-width="1.1"/><path d="M3 4 H5 M3 6 H5" stroke="#777" stroke-width="0.8"/><path d="M6.5 4.5 H11.5 L14 7 V14 H6.5 Z" fill="#fff" stroke="#5a5a5a" stroke-width="1.1"/><path d="M8.5 8 H12.3 M8.5 10 H12.3 M8.5 12 H12.3" stroke="#666" stroke-width="0.9"/></svg>
<div class="t" style="top:88.03px;font-size:10.6px;line-height:10.6px;color:#444;left:62.50px;transform-origin:0 50%;transform:scaleX(1.0103);">Copy</div>
<svg class="a" style="left:96px;top:90px;" width="6" height="4" viewBox="0 0 6 4"><path d="M0 0 H6 L3 3.5 Z" fill="#666"/></svg>
<svg class="a" style="left:45px;top:106px;" width="15" height="14" viewBox="0 0 15 14"><path d="M8 1 L13 6 L9 9 L5 5 Z" fill="#c9c9c9"/><path d="M6 7 L1 12 L3 13.5 L8 9" fill="#d9d9d9"/></svg>
<div class="t" style="top:108.53px;font-size:10.6px;line-height:10.6px;color:#a8a8a8;left:62.50px;transform-origin:0 50%;">Format Painter</div>
<div class="t" style="top:129.03px;font-size:10.6px;line-height:10.6px;color:#555;left:42.00px;transform-origin:0 50%;transform:scaleX(0.9918);">Clipboard</div>
<svg class="a" style="left:132.5px;top:131.5px;" width="7" height="7" viewBox="0 0 7 7"><path d="M0.5 6.5 V0.5 H6.5" fill="none" stroke="#aaa" stroke-width="1"/><path d="M2.5 2.5 L6 6 M3.5 6.3 H6.3 V3.5" fill="none" stroke="#999" stroke-width="1"/></svg>
<div class="a" style="left:143px;top:60px;width:1px;height:78px;background:#dadada;"></div>
<div class="a" style="left:147px;top:69px;width:101px;height:20.5px;background:#fff;border:1px solid #d2d2d2;box-sizing:border-box;"></div>
<div class="a" style="left:247px;top:69px;width:40px;height:20.5px;background:#fff;border:1px solid #d2d2d2;box-sizing:border-box;"></div>
<svg class="a" style="left:239.0px;top:77px;" width="4" height="4" viewBox="0 0 4 4"><path d="M0 0 H4 L2 3.5 Z" fill="#b4b4b4"/></svg>
<svg class="a" style="left:278.0px;top:77px;" width="4" height="4" viewBox="0 0 4 4"><path d="M0 0 H4 L2 3.5 Z" fill="#b4b4b4"/></svg>
<div class="t" style="top:75.03px;font-size:10.6px;line-height:10.6px;color:#a8a8a8;left:250.00px;transform-origin:0 50%;transform:scaleX(0.9088);">11</div>
<div class="t" style="top:73.50px;font-size:13px;line-height:13px;color:#a0a0a0;left:292.00px;transform-origin:0 50%;transform:scaleX(1.0956);">A</div>
<svg class="a" style="left:300px;top:71px;" width="6" height="4" viewBox="0 0 6 4"><path d="M0 3.5 L3 0 L6 3.5 Z" fill="#a0a0a0"/></svg>
<div class="t" style="top:75.19px;font-size:11px;line-height:11px;color:#a0a0a0;left:313.00px;transform-origin:0 50%;transform:scaleX(1.0903);">A</div>
<svg class="a" style="left:318.5px;top:72px;" width="6" height="4" viewBox="0 0 6 4"><path d="M0 0 H6 L3 3.5 Z" fill="#a0a0a0"/></svg>
<div class="t" style="top:100.77px;font-size:11.5px;line-height:11.5px;color:#a8a8a8;font-weight:bold;left:153.00px;transform-origin:0 50%;transform:scaleX(0.8428);">B</div>
<div class="t" style="top:100.34px;font-size:12px;line-height:12px;color:#a8a8a8;font-style:italic;left:173.50px;transform-origin:0 50%;transform:scaleX(1.4998);font-family:"Liberation Serif",serif;">I</div>
<div class="t" style="top:100.27px;font-size:11.5px;line-height:11.5px;color:#a8a8a8;left:192.30px;transform-origin:0 50%;transform:scaleX(0.9271);">U</div>
<div class="a" style="left:192.3px;top:111.5px;width:8px;height:1px;background:#a8a8a8;"></div>
<svg class="a" style="left:209.5px;top:105px;" width="5" height="4" viewBox="0 0 5 4"><path d="M0 0 H5 L2.5 3.5 Z" fill="#c0c0c0"/></svg>
<div class="a" style="left:221.5px;top:96px;width:1px;height:19px;background:#dadada;"></div>
<svg class="a" style="left:229px;top:99px;" width="14" height="14" viewBox="0 0 14 14"><path d="M0.5 0.5 H13.5 V13.5 H0.5 Z M7 0.5 V13.5 M0.5 7 H13.5" fill="none" stroke="#c4c4c4" stroke-width="1" stroke-dasharray="1.2 0.8"/><path d="M0 13.5 H14" stroke="#b0b0b0" stroke-width="1.2"/></svg>
<svg class="a" style="left:248.1px;top:105px;" width="5" height="4" viewBox="0 0 5 4"><path d="M0 0 H5 L2.5 3.5 Z" fill="#c0c0c0"/></svg>
<div class="a" style="left:260.3px;top:96px;width:1px;height:19px;background:#dadada;"></div>
<svg class="a" style="left:268px;top:97px;" width="16" height="18" viewBox="0 0 16 18"><path d="M2 9 L7.5 4 L13 9 L8 14 Z" fill="#e8e8e8" stroke="#b4b4b4" stroke-width="1.3"/><path d="M7 1 V7" stroke="#b4b4b4" stroke-width="1.3"/><path d="M13 9 Q15.5 11.5 14 13.5 Q12.5 11.5 13 9 Z" fill="#b4b4b4"/><rect x="1" y="15.5" width="14" height="2" fill="#dcdcdc"/></svg>
<svg class="a" style="left:287.2px;top:105px;" width="5" height="4" viewBox="0 0 5 4"><path d="M0 0 H5 L2.5 3.5 Z" fill="#c0c0c0"/></svg>
<div class="t" style="top:100.34px;font-size:12px;line-height:12px;color:#a8a8a8;left:301.70px;transform-origin:0 50%;transform:scaleX(1.0744);">A</div>
<svg class="a" style="left:318.5px;top:105px;" width="5" height="4" viewBox="0 0 5 4"><path d="M0 0 H5 L2.5 3.5 Z" fill="#c0c0c0"/></svg>
<div class="t" style="top:128.83px;font-size:10.6px;line-height:10.6px;color:#555;left:219.00px;transform-origin:0 50%;transform:scaleX(0.9901);">Font</div>
<svg class="a" style="left:320.5px;top:131.5px;" width="7" height="7" viewBox="0 0 7 7"><path d="M0.5 6.5 V0.5 H6.5" fill="none" stroke="#aaa" stroke-width="1"/><path d="M2.5 2.5 L6 6 M3.5 6.3 H6.3 V3.5" fill="none" stroke="#999" stroke-width="1"/></svg>
<div class="a" style="left:330.3px;top:60px;width:1px;height:78px;background:#dadada;"></div>
<svg class="a" style="left:337.7px;top:71px;" width="14" height="8.5" viewBox="0 0 14 8.5"><rect x="0" y="0" width="13" height="1" fill="#b4b4b4"/><rect x="0" y="2.5" width="13" height="1" fill="#b4b4b4"/><rect x="0" y="5" width="13" height="1" fill="#b4b4b4"/></svg>
<svg class="a" style="left:357.8px;top:74.5px;" width="14" height="8.5" viewBox="0 0 14 8.5"><rect x="0" y="0" width="13" height="1" fill="#b4b4b4"/><rect x="0" y="2.5" width="13" height="1" fill="#b4b4b4"/><rect x="0" y="5" width="13" height="1" fill="#b4b4b4"/></svg>
<svg class="a" style="left:378px;top:79.4px;" width="14" height="8.5" viewBox="0 0 14 8.5"><rect x="0" y="0" width="13" height="1" fill="#b4b4b4"/><rect x="0" y="2.5" width="13" height="1" fill="#b4b4b4"/><rect x="0" y="5" width="13" height="1" fill="#b4b4b4"/></svg>
<div class="a" style="left:398.2px;top:67px;width:1px;height:20px;background:#dadada;"></div>
<svg class="a" style="left:405px;top:71px;" width="16" height="14" viewBox="0 0 16 14"><text x="0" y="10" font-size="8" fill="#b0b0b0" transform="rotate(-40 6 7)" font-family="Liberation Sans">ab</text><path d="M4 13 L14 3 M11 3 H14 V6" stroke="#b0b0b0" stroke-width="1.2" fill="none"/></svg>
<svg class="a" style="left:423.1px;top:76px;" width="5" height="4" viewBox="0 0 5 4"><path d="M0 0 H5 L2.5 3.5 Z" fill="#c8c8c8"/></svg>
<div class="a" style="left:446px;top:67px;width:1px;height:49px;background:#dadada;"></div>
<svg class="a" style="left:452px;top:71px;" width="17" height="14" viewBox="0 0 17 14"><path d="M0.5 0.5 H12 M0.5 4.5 H8 M0.5 8.5 H5 M0.5 12.5 H8" stroke="#b0b0b0" stroke-width="1"/><rect x="0.5" y="3" width="10" height="9" fill="none" stroke="#c0c0c0"/><path d="M10 5 Q15 6 10 10" stroke="#b0b0b0" fill="none"/></svg>
<div class="t" style="top:74.33px;font-size:10.6px;line-height:10.6px;color:#a8a8a8;left:470.50px;transform-origin:0 50%;transform:scaleX(1.0142);">Wrap Text</div>
<svg class="a" style="left:337.7px;top:102px;" width="14" height="11.4" viewBox="0 0 14 11.4"><rect x="0" y="0" width="13" height="1" fill="#b4b4b4"/><rect x="0" y="2.6" width="9" height="1" fill="#b4b4b4"/><rect x="0" y="5.2" width="13" height="1" fill="#b4b4b4"/><rect x="0" y="7.8" width="9" height="1" fill="#b4b4b4"/></svg>
<svg class="a" style="left:358px;top:102px;" width="14" height="11.4" viewBox="0 0 14 11.4"><rect x="0" y="0" width="13" height="1" fill="#b4b4b4"/><rect x="2" y="2.6" width="9" height="1" fill="#b4b4b4"/><rect x="0" y="5.2" width="13" height="1" fill="#b4b4b4"/><rect x="2" y="7.8" width="9" height="1" fill="#b4b4b4"/></svg>
<svg class="a" style="left:378px;top:102px;" width="14" height="11.4" viewBox="0 0 14 11.4"><rect x="0" y="0" width="13" height="1" fill="#b4b4b4"/><rect x="4" y="2.6" width="9" height="1" fill="#b4b4b4"/><rect x="0" y="5.2" width="13" height="1" fill="#b4b4b4"/><rect x="4" y="7.8" width="9" height="1" fill="#b4b4b4"/></svg>
<div class="a" style="left:398.2px;top:96px;width:1px;height:20px;background:#dadada;"></div>
<svg class="a" style="left:405px;top:101px;" width="16" height="12" viewBox="0 0 16 12"><path d="M6 0.5 H15 M8 3.5 H15 M8 6.5 H15 M8 9.5 H15 M0 11.5 H15" stroke="#b0b0b0"/><path d="M0.5 5 L4 2.5 V7.5 Z M2 5 H7" fill="#b0b0b0" stroke="#b0b0b0"/></svg>
<svg class="a" style="left:425px;top:101px;" width="16" height="12" viewBox="0 0 16 12"><path d="M6 0.5 H15 M8 3.5 H15 M8 6.5 H15 M8 9.5 H15 M0 11.5 H15" stroke="#b0b0b0"/><path d="M7 5 L3.5 2.5 V7.5 Z M0 5 H5" fill="#b0b0b0" stroke="#b0b0b0"/></svg>
<svg class="a" style="left:452px;top:98px;" width="16" height="16" viewBox="0 0 16 16"><rect x="0.5" y="0.5" width="14" height="14" fill="none" stroke="#b8b8b8"/><path d="M0.5 4 H14.5 M0.5 11 H14.5" stroke="#c4c4c4"/><path d="M3 7.5 H12 M3 6 V9 M12 6 V9" stroke="#b0b0b0"/></svg>
<div class="t" style="top:102.63px;font-size:10.6px;line-height:10.6px;color:#a8a8a8;left:470.50px;transform-origin:0 50%;transform:scaleX(1.0318);">Merge &amp; Center</div>
<svg class="a" style="left:555.9px;top:105px;" width="5" height="4" viewBox="0 0 5 4"><path d="M0 0 H5 L2.5 3.5 Z" fill="#c8c8c8"/></svg>
<div class="t" style="top:129.03px;font-size:10.6px;line-height:10.6px;color:#555;left:419.00px;transform-origin:0 50%;transform:scaleX(1.0098);">Alignment</div>
<svg class="a" style="left:559px;top:131.5px;" width="7" height="7" viewBox="0 0 7 7"><path d="M0.5 6.5 V0.5 H6.5" fill="none" stroke="#aaa" stroke-width="1"/><path d="M2.5 2.5 L6 6 M3.5 6.3 H6.3 V3.5" fill="none" stroke="#999" stroke-width="1"/></svg>
<div class="a" style="left:569.5px;top:60px;width:1px;height:78px;background:#dadada;"></div>
<div class="a" style="left:574px;top:69px;width:119px;height:20.5px;background:#fff;border:1px solid #d2d2d2;box-sizing:border-box;"></div>
<div class="t" style="top:74.53px;font-size:10.6px;line-height:10.6px;color:#a8a8a8;left:576.80px;transform-origin:0 50%;transform:scaleX(1.0344);">Number</div>
<svg class="a" style="left:684.0px;top:77px;" width="4" height="4" viewBox="0 0 4 4"><path d="M0 0 H4 L2 3.5 Z" fill="#b4b4b4"/></svg>
<div class="t" style="top:101.00px;font-size:13px;line-height:13px;color:#a8a8a8;left:580.80px;transform-origin:0 50%;transform:scaleX(0.8990);">$</div>
<svg class="a" style="left:595.5px;top:105px;" width="5" height="4" viewBox="0 0 5 4"><path d="M0 0 H5 L2.5 3.5 Z" fill="#c8c8c8"/></svg>
<div class="t" style="top:101.00px;font-size:13px;line-height:13px;color:#a8a8a8;left:609.30px;transform-origin:0 50%;transform:scaleX(0.9517);">%</div>
<div class="t" style="top:97.15px;font-size:14px;line-height:14px;color:#a8a8a8;font-weight:bold;left:632.50px;transform-origin:0 50%;">,</div>
<div class="a" style="left:648.3px;top:96px;width:1px;height:20px;background:#dadada;"></div>
<svg class="a" style="left:655px;top:100px;" width="15" height="13" viewBox="0 0 15 13"><text x="5" y="6" font-size="6.5" fill="#a8a8a8" font-family="Liberation Sans">.0</text><text x="3" y="12.5" font-size="6.5" fill="#a8a8a8" font-family="Liberation Sans">.00</text><path d="M0.5 3.5 H4 M0.5 3.5 L2.5 1.5 M0.5 3.5 L2.5 5.5" stroke="#a8a8a8" stroke-width="0.9" fill="none"/></svg>
<svg class="a" style="left:676px;top:100px;" width="13" height="13" viewBox="0 0 13 13"><text x="1.5" y="6" font-size="6.5" fill="#a8a8a8" font-family="Liberation Sans">.00</text><text x="5" y="12.5" font-size="6.5" fill="#a8a8a8" font-family="Liberation Sans">.0</text><path d="M0.5 10 H4 M4 10 L2 8 M4 10 L2 12" stroke="#a8a8a8" stroke-width="0.9" fill="none"/></svg>
<div class="t" style="top:129.33px;font-size:10.6px;line-height:10.6px;color:#555;left:607.70px;transform-origin:0 50%;transform:scaleX(0.9681);">Number</div>
<svg class="a" style="left:686px;top:131.5px;" width="7" height="7" viewBox="0 0 7 7"><path d="M0.5 6.5 V0.5 H6.5" fill="none" stroke="#aaa" stroke-width="1"/><path d="M2.5 2.5 L6 6 M3.5 6.3 H6.3 V3.5" fill="none" stroke="#999" stroke-width="1"/></svg>
<div class="a" style="left:696.6px;top:60px;width:1px;height:78px;background:#dadada;"></div>
<svg class="a" style="left:720px;top:66px;" width="29" height="27" viewBox="0 0 29 27"><rect x="0.5" y="0.5" width="22" height="22" fill="#fafafa" stroke="#c8c8c8"/><path d="M6 0.5 V22.5" stroke="#d0d0d0"/><path d="M11.5 0.5 V22.5" stroke="#d0d0d0"/><path d="M17 0.5 V22.5" stroke="#d0d0d0"/><path d="M0.5 5 H22.5" stroke="#d0d0d0"/><path d="M0.5 9.5 H22.5" stroke="#d0d0d0"/><path d="M0.5 14 H22.5" stroke="#d0d0d0"/><path d="M0.5 18.5 H22.5" stroke="#d0d0d0"/><rect x="6" y="1" width="5" height="21" fill="#b8b8b8"/><rect x="11" y="5.5" width="5" height="9" fill="#c0c0c0"/><rect x="13.5" y="13.5" width="14" height="12" fill="#fff" stroke="#a8a8a8"/><path d="M17 17.5 H24 M17 20.5 H24 M22 15.5 L19 22.5" stroke="#909090" stroke-width="1"/></svg>
<div class="t" style="top:97.83px;font-size:10.6px;line-height:10.6px;color:#a8a8a8;left:705.20px;transform-origin:0 50%;transform:scaleX(1.0521);">Conditional</div>
<div class="t" style="top:112.03px;font-size:10.6px;line-height:10.6px;color:#a8a8a8;left:702.70px;transform-origin:0 50%;transform:scaleX(1.0067);">Formatting</div>
<svg class="a" style="left:756.0px;top:116px;" width="5" height="4" viewBox="0 0 5 4"><path d="M0 0 H5 L2.5 3.5 Z" fill="#c8c8c8"/></svg>
<svg class="a" style="left:779px;top:66px;" width="28" height="27" viewBox="0 0 28 27"><rect x="0.5" y="0.5" width="22" height="18" fill="#f4f4f4" stroke="#c8c8c8"/><path d="M6 0.5 V18.5" stroke="#d0d0d0"/><path d="M11.5 0.5 V18.5" stroke="#d0d0d0"/><path d="M17 0.5 V18.5" stroke="#d0d0d0"/><path d="M0.5 5 H22.5" stroke="#d0d0d0"/><path d="M0.5 9.5 H22.5" stroke="#d0d0d0"/><path d="M0.5 14 H22.5" stroke="#d0d0d0"/><rect x="6" y="5" width="16.5" height="13.5" fill="#d4d4d4"/><path d="M27 6 L14 20" stroke="#b0b0b0" stroke-width="3"/><path d="M14 19 Q10 22 9 26 Q13 26 16 22 Z" fill="#a8a8a8"/></svg>
<div class="t" style="top:97.83px;font-size:10.6px;line-height:10.6px;color:#a8a8a8;left:768.00px;transform-origin:0 50%;transform:scaleX(0.9725);">Format as</div>
<div class="t" style="top:112.03px;font-size:10.6px;line-height:10.6px;color:#a8a8a8;left:776.30px;transform-origin:0 50%;transform:scaleX(1.0260);">Table</div>
<svg class="a" style="left:802.0px;top:116px;" width="5" height="4" viewBox="0 0 5 4"><path d="M0 0 H5 L2.5 3.5 Z" fill="#c8c8c8"/></svg>
<div class="a" style="left:818.4px;top:64px;width:470px;height:56px;background:#fff;border:1px solid #c6c6c6;box-sizing:border-box;"></div>
<div class="a" style="left:822.2px;top:70px;width:90.5px;height:19.3px;background:#fbf9f9;"></div>
<div class="t" style="top:74.01px;font-size:11.8px;line-height:11.8px;color:#8c8c8c;left:826.20px;transform-origin:0 50%;">Normal</div>
<div class="a" style="left:918.2px;top:70px;width:90.5px;height:19.3px;background:#e5e1e2;"></div>
<div class="t" style="top:74.01px;font-size:11.8px;line-height:11.8px;color:#a6a6a6;left:922.20px;transform-origin:0 50%;">Bad</div>
<div class="a" style="left:1014.4px;top:70px;width:90.5px;height:19.3px;background:#e6e4e5;"></div>
<div class="t" style="top:74.01px;font-size:11.8px;line-height:11.8px;color:#a8a8a8;left:1018.40px;transform-origin:0 50%;">Good</div>
<div class="a" style="left:1110.3px;top:70px;width:90.5px;height:19.3px;background:#e6e3e4;"></div>
<div class="t" style="top:74.01px;font-size:11.8px;line-height:11.8px;color:#a8a8a8;left:1114.30px;transform-origin:0 50%;">Neutral</div>
<div class="a" style="left:1206.3px;top:70px;width:90.5px;height:19.3px;background:#f2f2f2;border:1px solid #a8a8a8;box-sizing:border-box;"></div>
<div class="t" style="top:74.01px;font-size:11.8px;line-height:11.8px;color:#c4c4c4;left:1210.30px;transform-origin:0 50%;">Calculation</div>
<div class="a" style="left:822.2px;top:95px;width:90.5px;height:19.6px;background:#c4c4c4;border:2px solid #7c7c7c;box-sizing:border-box;box-shadow:inset 0 0 0 1px #e4e4e4;"></div>
<div class="t" style="top:98.51px;font-size:11.8px;line-height:11.8px;color:#efefef;left:826.20px;transform-origin:0 50%;">Check Cell</div>
<div class="a" style="left:918.2px;top:95px;width:90.5px;height:19.6px;background:#fbf8f9;"></div>
<div class="t" style="top:98.51px;font-size:11.8px;line-height:11.8px;color:#b8b8b8;font-style:italic;left:922.20px;transform-origin:0 50%;">Explanatory ...</div>
<div class="a" style="left:1014.4px;top:95px;width:90.5px;height:19.6px;background:#dcdcdc;border:1px solid #a0a0a0;box-sizing:border-box;"></div>
<div class="t" style="top:98.51px;font-size:11.8px;line-height:11.8px;color:#a8a8a8;left:1018.40px;transform-origin:0 50%;">Input</div>
<div class="a" style="left:1110.3px;top:95px;width:90.5px;height:19.6px;background:#fbf8f9;"></div>
<div class="t" style="top:98.51px;font-size:11.8px;line-height:11.8px;color:#c8c8c8;left:1114.30px;transform-origin:0 50%;">Linked Cell</div>
<div class="a" style="left:1206.3px;top:95px;width:90.5px;height:19.6px;background:#f4f4f4;border:1px solid #c0c0c0;box-sizing:border-box;"></div>
<div class="t" style="top:98.51px;font-size:11.8px;line-height:11.8px;color:#666;left:1210.30px;transform-origin:0 50%;">Note</div>
<div class="a" style="left:1110.3px;top:112.5px;width:90.5px;height:1px;background:#b0b0b0;"></div>
<div class="a" style="left:1110.3px;top:114px;width:90.5px;height:1px;background:#b0b0b0;"></div>
<div class="t" style="top:128.53px;font-size:10.6px;line-height:10.6px;color:#555;left:995.60px;transform-origin:0 50%;transform:scaleX(0.8799);">Styles</div>
</body></html>
